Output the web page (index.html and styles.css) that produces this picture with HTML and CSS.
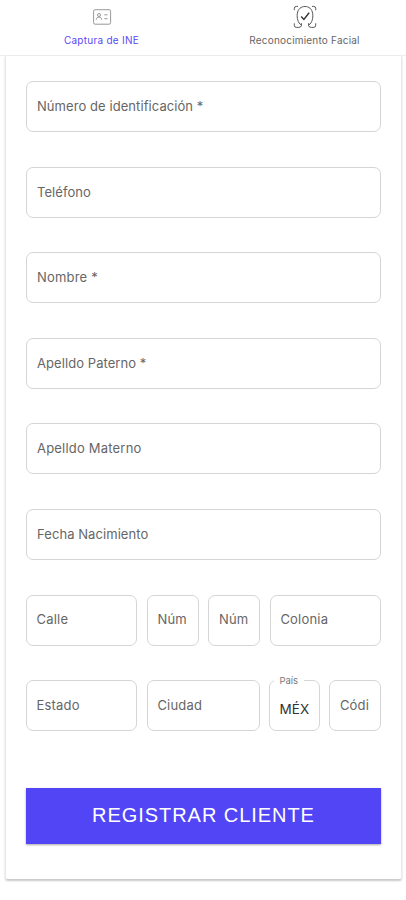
FILE: index.html
```
<!DOCTYPE html>
<html lang="es">
<head>
<meta charset="utf-8">
<title>Registro de cliente</title>
<link rel="stylesheet" href="styles.css">
</head>
<body>
<nav class="tabs">
  <div class="tab tab-active">
    <svg class="icon" width="24" height="24" viewBox="0 0 24 24" fill="none" stroke="#999" stroke-width="1">
      <rect x="3.6" y="4.7" width="17" height="14.5" rx="1.5"/>
      <circle cx="9" cy="10" r="1.5"/>
      <path d="M6.2 14.8c0-3.6 5.6-3.6 5.6 0M14.3 9.8h3.2M14.3 13.7h3.2"/>
    </svg>
    <span class="tab-label">Captura de INE</span>
  </div>
  <div class="tab">
    <svg class="icon" width="24" height="24" viewBox="0 0 24 24" fill="none" stroke="#555" stroke-width="1">
      <path d="M1.3 5.2V3.4Q1.3 1.4 3.4 1.4H5M19 1.4h1.6q2.1 0 2.1 2v1.8M1.3 18.3v2q0 2.1 2.1 2.1H5.6M22.7 18.3v2q0 2.1-2.1 2.1h-2.2"/>
      <path d="M8.4 20.2C4.8 17.8 3.8 13 4.3 8.7 5 3.7 8.2 1.5 12 1.5s7 2.2 7.7 7.2c.5 4.3-.5 9.1-4.1 11.5M8.4 18.2v2.5q0 1.5-2.8 1.7M15.6 18.2v2.5q0 1.5 2.8 1.7"/>
      <path d="M8.2 11.5l2.7 3 5.2-6.7" stroke="#333" stroke-width="1.4"/>
    </svg>
    <span class="tab-label">Reconocimiento Facial</span>
  </div>
</nav>
<main class="card">
  <form class="form">
    <div class="field field-tight"><span>Número de identificación *</span></div>
    <div class="field field-tight"><span>Teléfono</span></div>
    <div class="field"><span>Nombre *</span></div>
    <div class="field field-tight"><span>Apelldo Paterno *</span></div>
    <div class="field"><span>Apelldo Materno</span></div>
    <div class="field field-tight"><span>Fecha Nacimiento</span></div>
    <div class="row row-street">
      <div class="field"><span>Calle</span></div>
      <div class="field"><span>Núm</span></div>
      <div class="field"><span>Núm</span></div>
      <div class="field"><span>Colonia</span></div>
    </div>
    <div class="row row-state">
      <div class="field"><span>Estado</span></div>
      <div class="field"><span>Ciudad</span></div>
      <div class="field field-filled"><label class="floating">País</label><span>MÉX</span></div>
      <div class="field"><span>Códi</span></div>
    </div>
    <button class="submit" type="button">REGISTRAR CLIENTE</button>
  </form>
</main>
</body>
</html>
```
FILE: styles.css
```
* { box-sizing: border-box; }

body {
  margin: 0;
  height: 900px;
  overflow: hidden;
  background: #fff;
  font-family: Inter, "Liberation Sans", sans-serif;
}

.tabs {
  display: grid;
  grid-template-columns: 1fr 1fr;
  height: 56px;
  background: #fff;
  border-bottom: 1px solid #eee;
}

.tab {
  display: flex;
  flex-direction: column;
  align-items: center;
  padding-top: 5px;
  color: #666;
  font-size: 10px;
  letter-spacing: 0.2px;
}

.tab-active {
  color: #5b48f5;
  letter-spacing: 0.27px;
}

.icon { display: block; }

.tab-label {
  margin-top: 4px;
  line-height: 14px;
}

.card {
  height: 824px;
  margin: 0 4px 0 5px;
  padding: 25px 20px 0;
  border: 1px solid #e9e9e9;
  border-top: 0;
  border-bottom-color: #ccc;
  border-radius: 0 0 3px 3px;
  box-shadow: 0 1px 2px rgba(0, 0, 0, 0.22);
}

.form {
  display: flex;
  flex-direction: column;
  gap: 34.6px;
}

.field {
  position: relative;
  display: flex;
  align-items: center;
  height: 51px;
  padding: 0 0 1px 10px;
  border: 1px solid #d5d5d5;
  border-radius: 7px;
  color: #666;
  font-size: 13px;
  letter-spacing: 0.2px;
  white-space: nowrap;
}

.field-tight { letter-spacing: 0.07px; }

.row {
  display: grid;
  gap: 9.5px;
}

.row .field { padding: 0 0 2px 9.5px; }

.row-street { grid-template-columns: 111.4px 52px 52px 1fr; }
.row-state { grid-template-columns: 111.4px 113px 50.5px 1fr; }

.row .field-filled {
  padding: 6px 0 0 9px;
  color: #333;
  font-size: 13.5px;
}

/* Label resting in the notch of the outline */
.floating {
  position: absolute;
  top: -6px;
  left: 4px;
  padding: 0 6px 0 5px;
  background: #fff;
  color: #777;
  font-size: 9.5px;
  line-height: 12px;
  letter-spacing: 0;
}

.submit {
  height: 56px;
  margin-top: 22px;
  border: 0;
  background: #5145f6;
  box-shadow: 0 1px 2px rgba(0, 0, 0, 0.35);
  color: #fff;
  font-family: "Liberation Sans", sans-serif;
  font-size: 20px;
  letter-spacing: 0.95px;
}
```
